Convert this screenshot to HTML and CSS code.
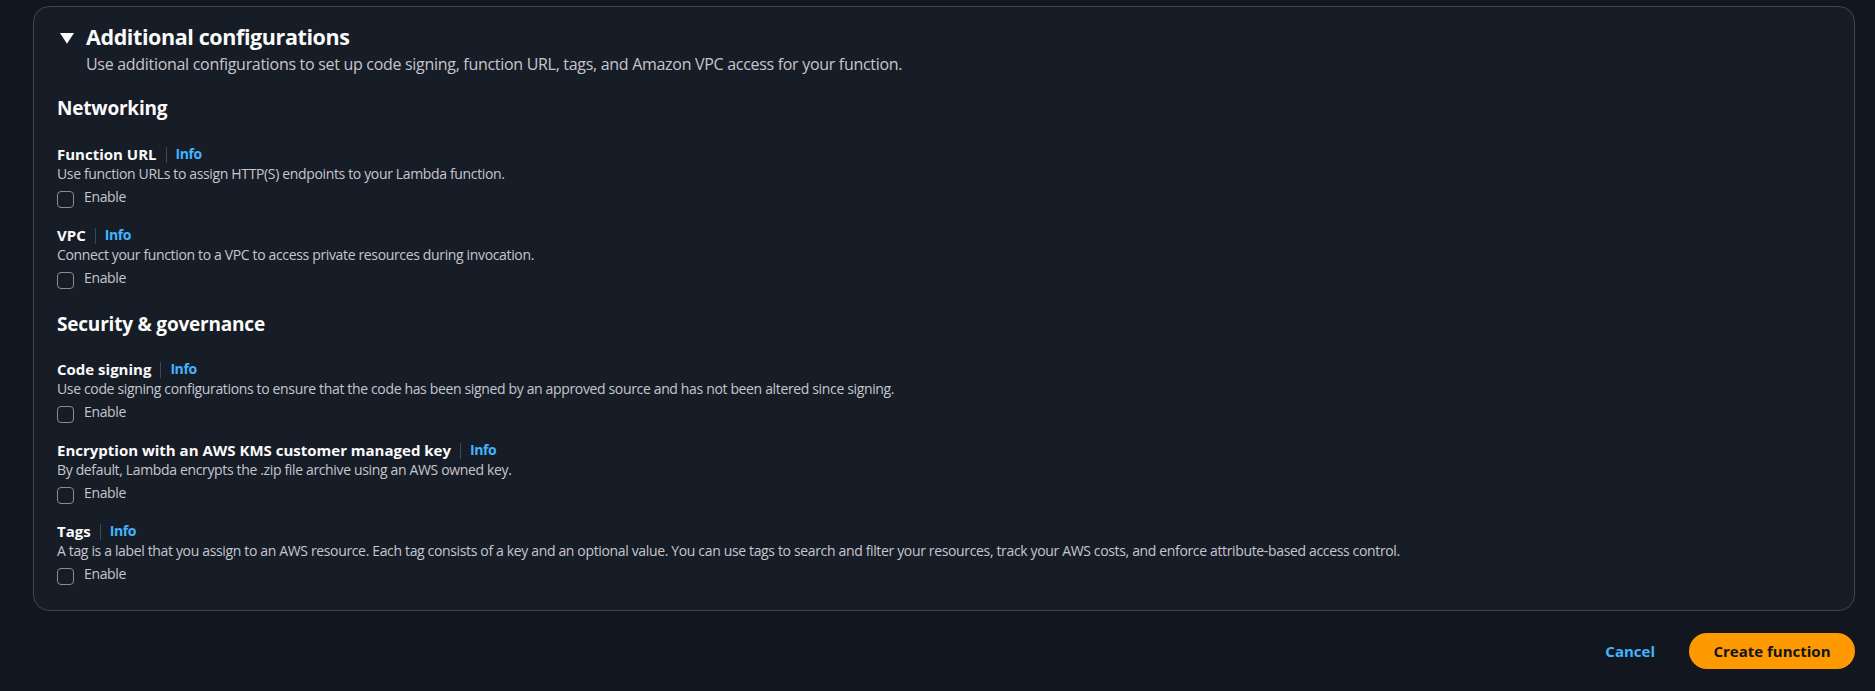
FILE: index.html
```html
<!DOCTYPE html>
<html lang="en">
<head>
<meta charset="utf-8">
<title>Additional configurations</title>
<link rel="stylesheet" href="styles.css">
</head>
<body>
<div class="page">
  <section class="card">
    <header class="card-header">
      <svg class="caret" width="16" height="16" viewBox="0 0 16 16" aria-hidden="true"><path d="M1 3h14L8 13.7z" fill="currentColor"/></svg>
      <div class="header-text">
        <h2 class="title">Additional configurations</h2>
        <p class="subtitle">Use additional configurations to set up code signing, function URL, tags, and Amazon VPC access for your function.</p>
      </div>
    </header>

    <div class="card-body">
      <h3 class="section-title first">Networking</h3>
      <div class="fields">
        <div class="field">
          <div class="label-row"><span class="label">Function URL</span><span class="sep"></span><a class="info" href="#">Info</a></div>
          <p class="desc">Use function URLs to assign HTTP(S) endpoints to your Lambda function.</p>
          <label class="check"><span class="box"></span><span class="check-text">Enable</span></label>
        </div>
        <div class="field">
          <div class="label-row"><span class="label">VPC</span><span class="sep"></span><a class="info" href="#">Info</a></div>
          <p class="desc">Connect your function to a VPC to access private resources during invocation.</p>
          <label class="check"><span class="box"></span><span class="check-text">Enable</span></label>
        </div>
      </div>

      <h3 class="section-title">Security &amp; governance</h3>
      <div class="fields">
        <div class="field">
          <div class="label-row"><span class="label">Code signing</span><span class="sep"></span><a class="info" href="#">Info</a></div>
          <p class="desc">Use code signing configurations to ensure that the code has been signed by an approved source and has not been altered since signing.</p>
          <label class="check"><span class="box"></span><span class="check-text">Enable</span></label>
        </div>
        <div class="field">
          <div class="label-row"><span class="label">Encryption with an AWS KMS customer managed key</span><span class="sep"></span><a class="info" href="#">Info</a></div>
          <p class="desc">By default, Lambda encrypts the .zip file archive using an AWS owned key.</p>
          <label class="check"><span class="box"></span><span class="check-text">Enable</span></label>
        </div>
        <div class="field">
          <div class="label-row"><span class="label">Tags</span><span class="sep"></span><a class="info" href="#">Info</a></div>
          <p class="desc">A tag is a label that you assign to an AWS resource. Each tag consists of a key and an optional value. You can use tags to search and filter your resources, track your AWS costs, and enforce attribute-based access control.</p>
          <label class="check"><span class="box"></span><span class="check-text">Enable</span></label>
        </div>
      </div>
    </div>
  </section>

  <div class="actions">
    <a class="link-btn" href="#">Cancel</a>
    <button class="primary-btn" type="button">Create function</button>
  </div>
</div>
</body>
</html>
```

FILE: styles.css
```css
* { box-sizing: border-box; }

html, body {
  margin: 0;
  padding: 0;
  background: #12171f;
}

body {
  font-family: "Open Sans", "Noto Sans", Arial, sans-serif;
  color: #dedee3;
  font-size: 14px;
}

.page {
  padding: 6px 20px 0 33px;
  display: flex;
  flex-direction: column;
}

.card {
  background: #171d27;
  border: 1px solid #424650;
  border-radius: 16px;
  padding: 16px 23px 25px 23px;
}

.card-header {
  display: flex;
  align-items: flex-start;
  gap: 11px;
}

.caret {
  color: #fbfbfb;
  width: 16px;
  height: 16px;
  margin: 7px 0 0 2px;
  flex: none;
}

.title {
  margin: 0;
  font-size: 21.5px;
  line-height: 28px;
  letter-spacing: -0.4px;
  font-weight: 700;
  color: #fbfbfb;
}

.subtitle {
  margin: 2px 0 0;
  font-size: 16px;
  line-height: 22px;
  letter-spacing: -0.3px;
  color: #c6c6cd;
}

.card-body {
  display: flex;
  flex-direction: column;
}

.section-title {
  margin: 23px 0 23px;
  font-size: 19px;
  line-height: 24px;
  letter-spacing: -0.2px;
  font-weight: 700;
  color: #fbfbfb;
}

.section-title.first {
  margin: 21px 0 24px;
}

.fields {
  display: flex;
  flex-direction: column;
  gap: 17px;
}

.field {
  display: flex;
  flex-direction: column;
}

.label-row {
  display: flex;
  align-items: center;
  height: 20px;
}

.label {
  font-size: 15px;
  font-weight: 700;
  color: #fbfbfb;
  line-height: 20px;
}

.sep {
  width: 1px;
  height: 16px;
  background: #424650;
  margin: 1px 9px 0 9px;
}

.info {
  color: #42b4ff;
  font-size: 14px;
  font-weight: 700;
  letter-spacing: -0.4px;
  text-decoration: none;
  line-height: 20px;
}

.desc {
  margin: 0;
  line-height: 20px;
  letter-spacing: -0.35px;
  color: #c6c6cd;
}

.check {
  margin-top: 2px;
  display: flex;
  align-items: flex-start;
  gap: 10px;
  height: 22px;
}

.box {
  width: 17px;
  height: 17px;
  border: 1.5px solid #8c8c94;
  border-radius: 4px;
  flex: none;
  margin-top: 5px;
}

.check-text {
  color: #c6c6cd;
  line-height: 22px;
  letter-spacing: -0.35px;
}

.actions {
  display: flex;
  justify-content: flex-end;
  align-items: center;
  gap: 34px;
  margin-top: 22px;
}

.link-btn {
  color: #42b4ff;
  font-weight: 700;
  font-size: 15px;
  text-decoration: none;
}

.primary-btn {
  background: #ff9900;
  color: #0f141a;
  border: none;
  border-radius: 18px;
  height: 36px;
  width: 166px;
  font-family: "Open Sans", "Noto Sans", Arial, sans-serif;
  font-weight: 700;
  font-size: 15px;
  cursor: pointer;
}
```
